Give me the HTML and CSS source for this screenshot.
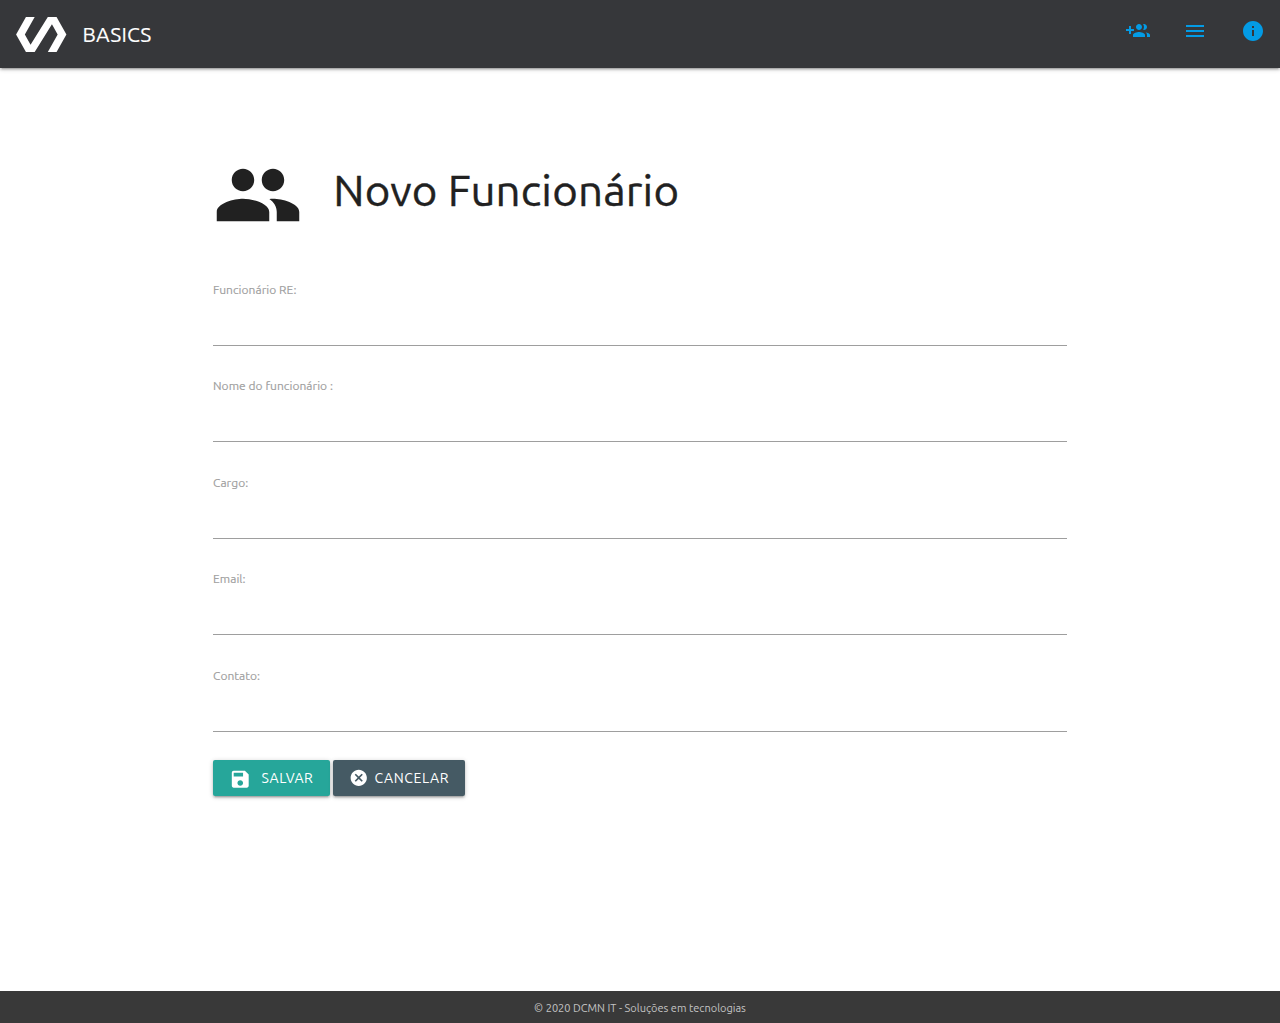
FILE: index.html
```html
<!DOCTYPE html>
<html lang="pt-BR">
<head>
<meta charset="utf-8">
<title>Novo Funcionário</title>
<link rel="stylesheet" href="styles.css">
</head>
<body>
<header class="navbar">
  <a class="brand">
    <svg class="logo" viewBox=".5 4 23 16"><path d="M19 4h-4L7.11 16.63 4.5 12 9 4H5L.5 12 5 20h4l7.89-12.63L19.5 12 15 20h4l4.5-8z"/></svg>
    <span class="brand-name">BASICS</span>
  </a>
  <nav class="actions">
    <svg class="icon" viewBox="0 0 24 24"><path d="M8 10H5V7H3v3H0v2h3v3h2v-3h3v-2zm10 1c1.66 0 2.99-1.34 2.99-3S19.66 5 18 5c-.32 0-.63.05-.91.14.57.81.9 1.79.9 2.86s-.34 2.04-.9 2.86c.28.09.59.14.91.14zm-5 0c1.66 0 2.99-1.34 2.99-3S14.66 5 13 5c-1.66 0-3 1.34-3 3s1.34 3 3 3zm6.62 2.16c.83.73 1.38 1.66 1.38 2.84v2h3v-2c0-1.54-2.37-2.49-4.38-2.84zM13 13c-2 0-6 1-6 3v2h12v-2c0-2-4-3-6-3z"/></svg>
    <svg class="icon" viewBox="0 0 24 24"><path d="M3 18h18v-2H3v2zm0-5h18v-2H3v2zm0-7v2h18V6H3z"/></svg>
    <svg class="icon" viewBox="0 0 24 24"><path d="M12 2C6.48 2 2 6.48 2 12s4.480 10 10 10 10-4.480 10-10S17.520 2 12 2zm1 15h-2v-6h2v6zm0-8h-2V7h2v2z"/></svg>
  </nav>
</header>
<main class="container">
  <div class="heading">
    <svg class="people" viewBox="0 0 24 24"><path d="M16 11c1.66 0 2.99-1.34 2.99-3S17.66 5 16 5c-1.66 0-3 1.34-3 3s1.34 3 3 3zm-8 0c1.66 0 2.990-1.340 2.990-3S9.660 5 8 5C6.340 5 5 6.340 5 8s1.340 3 3 3zm0 2c-2.330 0-7 1.170-7 3.500V19h14v-2.500c0-2.330-4.670-3.500-7-3.500zm8 0c-.290 0-.620.020-.970.050 1.160.840 1.970 1.970 1.970 3.450V19h6v-2.500c0-2.330-4.670-3.500-7-3.500z"/></svg>
    <h1 class="title">Novo Funcionário</h1>
  </div>
  <form class="form">
    <div class="field"><label class="label" for="re">Funcionário RE:</label><input class="input" id="re"></div>
    <div class="field"><label class="label" for="nome">Nome do funcionário :</label><input class="input" id="nome"></div>
    <div class="field"><label class="label" for="cargo">Cargo:</label><input class="input" id="cargo"></div>
    <div class="field"><label class="label" for="email">Email:</label><input class="input" id="email"></div>
    <div class="field"><label class="label" for="contato">Contato:</label><input class="input" id="contato"></div>
    <div class="buttons">
      <button class="btn btn-save" type="button"><svg class="icon-save" viewBox="0 0 24 24"><path d="M17 3H5c-1.110 0-2 .9-2 2v14c0 1.100.890 2 2 2h14c1.100 0 2-.9 2-2V7l-4-4zm-5 16c-1.660 0-3-1.340-3-3s1.340-3 3-3 3 1.340 3 3-1.340 3-3 3zm3-10H5V5h10v4z"/></svg><span>SALVAR</span></button>
      <button class="btn btn-cancel" type="button"><svg class="icon-cancel" viewBox="0 0 24 24"><path d="M12 2C6.470 2 2 6.470 2 12s4.470 10 10 10 10-4.470 10-10S17.530 2 12 2zm5 13.590L15.590 17 12 13.410 8.410 17 7 15.590 10.590 12 7 8.410 8.410 7 12 10.590 15.590 7 17 8.410 13.410 12 17 15.590z"/></svg><span>CANCELAR</span></button>
    </div>
  </form>
</main>
<footer class="footer"><span class="copyright">© 2020 DCMN IT - Soluções em tecnologias</span></footer>
</body>
</html>
```
FILE: styles.css
```css
* { box-sizing: border-box; }

body {
  margin: 0;
  min-height: 100vh;
  display: flex;
  flex-direction: column;
  background: #fff;
  color: #212121;
  font-family: Ubuntu, "Noto Sans", "Open Sans", sans-serif;
  font-weight: 400;
}

svg { display: block; flex: none; fill: currentColor; }

.navbar {
  height: 68px;
  padding: 0 15px 0 16px;
  display: flex;
  justify-content: space-between;
  background: #36373a;
  box-shadow: 0 2px 2px 0 rgba(0,0,0,.14), 0 3px 1px -2px rgba(0,0,0,.12), 0 1px 5px 0 rgba(0,0,0,.2);
}
.brand { display: flex; align-items: center; gap: 16px; color: #fff; }
.logo { width: 50.5px; height: 35px; }
.brand-name { font-size: 21px; line-height: 29px; letter-spacing: .2px; -webkit-text-stroke: .15px; }
.actions { display: flex; gap: 33.5px; padding-top: 19px; color: #039be5; }
.icon { width: 24px; height: 24px; }
.icon:nth-child(2) { margin: 0 .5px 0 -.5px; }

.container { width: 854px; margin: 0 auto; flex: 1; }
.heading { display: flex; align-items: center; gap: 30.6px; height: 90px; margin: 82px 0 0 -.4px; }
.people { width: 90px; height: 90px; }
.title {
  margin: 0 0 10px;
  font-size: 43.8px;
  font-weight: 400;
  line-height: 50px;
  letter-spacing: .18px;
  white-space: nowrap;
  -webkit-text-stroke: .4px;
}

.form { margin-top: 40.5px; }
.field { height: 96.5px; display: flex; flex-direction: column; }
.label {
  height: 18px;
  line-height: 18px;
  font-size: 12px;
  letter-spacing: .04px;
  color: #9e9e9e;
  align-self: flex-start;
  -webkit-text-stroke: .15px;
}
.input {
  width: 100%;
  height: 47px;
  padding: 0;
  border: 0;
  border-bottom: 1px solid #9e9e9e;
  background: transparent;
  outline: 0;
}

.buttons { display: flex; gap: 3px; margin-top: -3px; }
.btn {
  height: 36px;
  padding: 0 16px;
  display: flex;
  align-items: center;
  border: 0;
  border-radius: 2px;
  color: #fff;
  font-family: inherit;
  font-size: 14px;
  font-weight: inherit;
  letter-spacing: .6px;
  line-height: 36px;
  white-space: nowrap;
  box-shadow: 0 2px 2px 0 rgba(0,0,0,.14), 0 3px 1px -2px rgba(0,0,0,.12), 0 1px 5px 0 rgba(0,0,0,.2);
}
.btn-save { width: 117px; gap: 10px; background: #26a69a; }
.btn-cancel { width: 132px; gap: 6px; background: #455a64; }
.icon-save { width: 22.5px; height: 22.5px; margin-top: 3px; }
.icon-cancel { width: 19.5px; height: 19.5px; }

.footer {
  height: 32px;
  padding-top: 2px;
  display: flex;
  align-items: center;
  justify-content: center;
  background: #393939;
  color: #c4c4c4;
  font-size: 11px;
}
```
